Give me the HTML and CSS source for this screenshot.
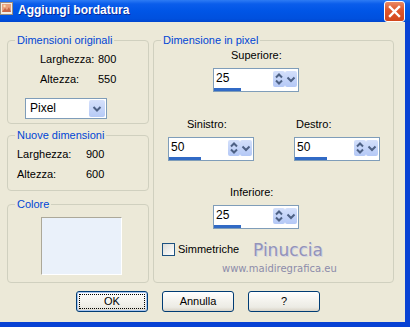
FILE: index.html
```html
<!DOCTYPE html>
<html lang="it">
<head>
    <meta charset="UTF-8">
    <title>Aggiungi bordatura</title>
    <link rel="stylesheet" href="styles.css">
</head>
<body>
    <div class="window">
        <div class="titlebar">
            <svg class="app-icon" width="14" height="15" viewBox="0 0 14 15">
                <rect x="0.5" y="1.5" width="12" height="12" fill="#F2EEE6" stroke="#9A8C7C"/>
                <rect x="2" y="3" width="9" height="8" fill="#E9A27E"/>
                <path d="M2 11 L5 7 L7 9 L9 6 L11 11 Z" fill="#C86848"/>
                <circle cx="4.5" cy="5" r="1.2" fill="#F8E0B0"/>
            </svg>
            <span class="title">Aggiungi bordatura</span>
            <div class="close">
                <svg width="19" height="19" viewBox="0 0 19 19">
                    <path d="M5 5 L14 14 M14 5 L5 14" stroke="#fff" stroke-width="2.4" stroke-linecap="square"/>
                </svg>
            </div>
        </div>

        <div class="client">
            <div class="panels">
                <div class="left">
                    <fieldset class="group g-orig">
                        <legend>Dimensioni originali</legend>
                        <div class="kv"><span class="k">Larghezza:</span><span>800</span></div>
                        <div class="kv"><span class="k">Altezza:</span><span>550</span></div>
                        <div class="select">
                            <span class="select-text">Pixel</span>
                            <span class="drop">
                                <svg width="10" height="8" viewBox="0 0 10 8"><path d="M1.5 2 L5 5.5 L8.5 2" fill="none" stroke="#4D6185" stroke-width="2"/></svg>
                            </span>
                        </div>
                    </fieldset>

                    <fieldset class="group g-new">
                        <legend>Nuove dimensioni</legend>
                        <div class="kv"><span class="k">Larghezza:</span><span>900</span></div>
                        <div class="kv"><span class="k">Altezza:</span><span>600</span></div>
                    </fieldset>

                    <fieldset class="group g-color">
                        <legend>Colore</legend>
                        <div class="swatch"></div>
                    </fieldset>
                </div>

                <fieldset class="group g-pixel">
                    <legend>Dimensione in pixel</legend>

                    <div class="row row-top">
                        <div class="field">
                            <div class="field-label lbl-sup">Superiore:</div>
                            <div class="spin">
                                <div class="spin-top">
                                    <span class="spin-value">25</span>
                                    <span class="spin-btn">
                                        <svg width="12" height="16" viewBox="0 0 12 16"><path d="M3 6.5 L6 3.5 L9 6.5 M3 9.5 L6 12.5 L9 9.5" fill="none" stroke="#4D6185" stroke-width="2"/></svg>
                                    </span>
                                    <span class="spin-btn">
                                        <svg width="12" height="16" viewBox="0 0 12 16"><path d="M2.5 6.5 L6 10 L9.5 6.5" fill="none" stroke="#4D6185" stroke-width="2"/></svg>
                                    </span>
                                </div>
                                <div class="spin-bar bar-25"></div>
                            </div>
                        </div>
                    </div>

                    <div class="row row-mid">
                        <div class="field">
                            <div class="field-label lbl-sin">Sinistro:</div>
                            <div class="spin">
                                <div class="spin-top">
                                    <span class="spin-value">50</span>
                                    <span class="spin-btn">
                                        <svg width="12" height="16" viewBox="0 0 12 16"><path d="M3 6.5 L6 3.5 L9 6.5 M3 9.5 L6 12.5 L9 9.5" fill="none" stroke="#4D6185" stroke-width="2"/></svg>
                                    </span>
                                    <span class="spin-btn">
                                        <svg width="12" height="16" viewBox="0 0 12 16"><path d="M2.5 6.5 L6 10 L9.5 6.5" fill="none" stroke="#4D6185" stroke-width="2"/></svg>
                                    </span>
                                </div>
                                <div class="spin-bar bar-50"></div>
                            </div>
                        </div>
                        <div class="field field-right">
                            <div class="field-label lbl-des">Destro:</div>
                            <div class="spin">
                                <div class="spin-top">
                                    <span class="spin-value">50</span>
                                    <span class="spin-btn">
                                        <svg width="12" height="16" viewBox="0 0 12 16"><path d="M3 6.5 L6 3.5 L9 6.5 M3 9.5 L6 12.5 L9 9.5" fill="none" stroke="#4D6185" stroke-width="2"/></svg>
                                    </span>
                                    <span class="spin-btn">
                                        <svg width="12" height="16" viewBox="0 0 12 16"><path d="M2.5 6.5 L6 10 L9.5 6.5" fill="none" stroke="#4D6185" stroke-width="2"/></svg>
                                    </span>
                                </div>
                                <div class="spin-bar bar-50"></div>
                            </div>
                        </div>
                    </div>

                    <div class="row row-bot">
                        <div class="field">
                            <div class="field-label lbl-inf">Inferiore:</div>
                            <div class="spin">
                                <div class="spin-top">
                                    <span class="spin-value">25</span>
                                    <span class="spin-btn">
                                        <svg width="12" height="16" viewBox="0 0 12 16"><path d="M3 6.5 L6 3.5 L9 6.5 M3 9.5 L6 12.5 L9 9.5" fill="none" stroke="#4D6185" stroke-width="2"/></svg>
                                    </span>
                                    <span class="spin-btn">
                                        <svg width="12" height="16" viewBox="0 0 12 16"><path d="M2.5 6.5 L6 10 L9.5 6.5" fill="none" stroke="#4D6185" stroke-width="2"/></svg>
                                    </span>
                                </div>
                                <div class="spin-bar bar-25"></div>
                            </div>
                        </div>
                    </div>

                    <div class="row row-check">
                        <span class="checkbox"></span>
                        <span>Simmetriche</span>
                        <!-- watermark stamped over the screenshot -->
                        <div class="mark-name">Pinuccia</div>
                        <div class="mark-url">www.maidiregrafica.eu</div>
                    </div>
                </fieldset>
            </div>

            <div class="buttons">
                <div class="btn btn-default"><span class="focus">OK</span></div>
                <div class="btn">Annulla</div>
                <div class="btn">?</div>
            </div>
        </div>
    </div>
</body>
</html>
```

FILE: styles.css
```css
body {
    margin: 0;
    font-family: "Liberation Sans", Arial, sans-serif;
    font-size: 11px;
    line-height: 13px;
    color: #000;
    background: #ECE9D8;
}

.window {
    width: 410px;
    height: 327px;
    display: flex;
    flex-direction: column;
    overflow: hidden;
}

/* title bar */
.titlebar {
    height: 22px;
    display: flex;
    align-items: flex-start;
    background: linear-gradient(to bottom, #2D7BF4 0%, #0A5DEB 18%, #0055E6 50%, #0050DE 85%, #0046CF 100%);
    color: #fff;
    flex-shrink: 0;
}

.app-icon {
    margin-top: 1px;
    flex-shrink: 0;
}

.title {
    margin-left: 4px;
    margin-top: 3px;
    font-weight: bold;
    font-size: 12px;
    line-height: 15px;
    text-shadow: 1px 1px 0 #0A2A9A;
}

.close {
    margin-left: auto;
    margin-right: 5px;
    margin-top: 1px;
    width: 21px;
    height: 21px;
    box-sizing: border-box;
    border: 1px solid #fff;
    border-radius: 3px;
    background: linear-gradient(to bottom, #E98A66 0%, #E0582E 40%, #D2471C 100%);
    display: flex;
    align-items: center;
    justify-content: center;
}

/* dialog body */
.client {
    flex: 1;
    background: #ECE9D8;
    border-right: 5px solid #0842D4;
    border-bottom: 5px solid #0842D4;
    padding: 12px 0 0 7px;
}

.panels {
    display: flex;
    gap: 4px;
}

.left {
    width: 142px;
    display: flex;
    flex-direction: column;
}

.group {
    margin: 0;
    padding: 0;
    border: 1px solid #D0D0BF;
    border-radius: 4px;
    min-width: 0;
    box-sizing: border-box;
}

.group legend {
    margin-left: 7px;
    padding: 0 2px;
    color: #0046D5;
    font-size: 11px;
    line-height: 13px;
}

.g-orig {
    height: 90px;
}

.g-new {
    height: 62px;
    margin-top: 5px;
}

.g-color {
    height: 85px;
    margin-top: 7px;
}

.kv {
    display: flex;
    margin-top: 6px;
}

.kv + .kv {
    margin-top: 7px;
}

.g-orig .kv {
    padding-left: 32px;
}

.g-orig .kv .k {
    width: 58px;
}

.g-new .kv {
    padding-left: 9px;
}

.g-new .kv .k {
    width: 69px;
}

.select {
    margin: 12px 0 0 17px;
    width: 82px;
    height: 21px;
    box-sizing: border-box;
    border: 1px solid #7F9DB9;
    background: #fff;
    display: flex;
    align-items: center;
    padding: 1px;
}

.select-text {
    flex: 1;
    padding-left: 3px;
    font-size: 12px;
}

.drop {
    width: 16px;
    height: 17px;
    border-radius: 2px;
    background: linear-gradient(to bottom, #D6E1FB, #B6CAF6);
    display: flex;
    align-items: center;
    justify-content: center;
}

.swatch {
    margin: 6px 0 0 33px;
    width: 81px;
    height: 58px;
    box-sizing: border-box;
    background: #EAF1FA;
    border: 1px solid #fff;
    border-top-color: #ACA899;
    border-left-color: #ACA899;
}

/* right panel */
.g-pixel {
    width: 241px;
    height: 249px;
}

.row {
    display: flex;
}

.row-top {
    margin-top: 2px;
    padding-left: 59px;
}

.row-mid {
    margin-top: 26px;
    padding-left: 14px;
}

.row-bot {
    margin-top: 25px;
    padding-left: 59px;
}

.field-right {
    margin-left: 40px;
}

.field-label {
    height: 13px;
}

.lbl-sup { padding-left: 18px; }
.lbl-sin { padding-left: 19px; }
.lbl-des { padding-left: 2px; }
.lbl-inf { padding-left: 17px; }

.spin {
    margin-top: 6px;
    width: 86px;
    height: 24px;
    box-sizing: border-box;
    border: 1px solid #7F9DB9;
    background: #fff;
    display: flex;
    flex-direction: column;
}

.spin-top {
    display: flex;
    align-items: flex-start;
    height: 18px;
    padding: 2px 1px 0 2px;
    box-sizing: border-box;
}

.spin-value {
    flex: 1;
    font-size: 12px;
    line-height: 14px;
}

.spin-btn {
    width: 12px;
    height: 16px;
    border-radius: 2px;
    background: linear-gradient(to bottom, #D4E0FB, #B4C8F6);
    display: flex;
}

.spin-bar {
    margin-top: 1px;
    height: 4px;
    background: #316AC5;
}

.bar-25 { width: 27px; }
.bar-50 { width: 32px; }

.row-check {
    margin-top: 14px;
    padding-left: 8px;
    align-items: center;
    gap: 3px;
    position: relative;
    height: 13px;
}

.checkbox {
    width: 13px;
    height: 13px;
    box-sizing: border-box;
    border: 1px solid #1C5180;
    background: linear-gradient(135deg, #DCDCD7, #FFFFFF);
}

.mark-name {
    position: absolute;
    left: 99px;
    top: -1px;
    font-family: "DejaVu Sans", sans-serif;
    font-size: 17px;
    line-height: 17px;
    color: #9393BA;
    text-shadow: 1px 1px 0 #D4D4E2;
}

.mark-url {
    position: absolute;
    left: 68px;
    top: 20px;
    font-family: "DejaVu Sans", sans-serif;
    font-size: 10px;
    line-height: 12px;
    color: #8C8CAA;
    white-space: nowrap;
}

/* buttons */
.buttons {
    display: flex;
    gap: 14px;
    margin-top: 8px;
    padding-left: 69px;
}

.btn {
    width: 72px;
    height: 21px;
    box-sizing: border-box;
    border: 1px solid #003C74;
    border-radius: 3px;
    background: linear-gradient(to bottom, #FFFFFF 0%, #F4F3EE 45%, #ECEBE4 80%, #D8D2C6 100%);
    display: flex;
    align-items: center;
    justify-content: center;
}

.btn-default {
    box-shadow: inset 0 0 0 1px #A9C6F0;
    padding: 2px;
}

.focus {
    flex: 1;
    align-self: stretch;
    display: flex;
    align-items: center;
    justify-content: center;
    border: 1px dotted #000;
}
```
